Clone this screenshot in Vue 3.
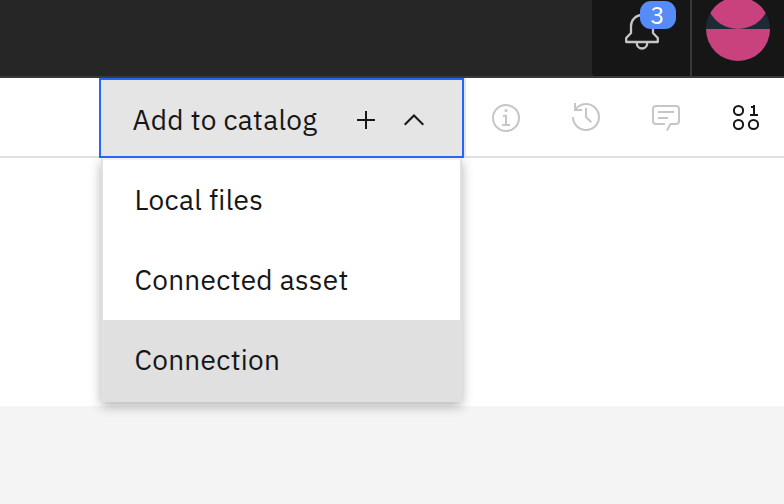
<script setup>
import { ref } from 'vue'
const items = ['Local files', 'Connected asset', 'Connection']
const active = ref(2)
</script>

<template>
  <div class="page">
    <header class="header">
      <button class="notify" aria-label="Notifications">
        <svg class="bell" width="36" height="38" viewBox="0 0 36 38">
          <path d="M2.2 30v-4L7 21v-7a11 11 0 0 1 22 0v7l4.8 5v4ZM12.8 30v1.3a5.2 5.2 0 0 0 10.4 0V30" />
        </svg>
        <span class="badge">3</span>
      </button>
      <div class="account">
        <svg class="avatar" width="64" height="64" viewBox="0 0 64 64">
          <defs><clipPath id="face"><circle cx="32" cy="32" r="32" /></clipPath></defs>
          <g clip-path="url(#face)">
            <rect width="64" height="64" fill="#1c2b35" />
            <circle cx="32" cy="0" r="32" />
            <rect y="32" width="64" height="32" />
          </g>
        </svg>
      </div>
    </header>
    <div class="toolbar">
      <button class="trigger">
        <span class="trigger-label">Add to catalog</span>
        <svg class="plus" width="20" height="20" viewBox="0 0 20 20"><path d="M10 1v18M1 10h18" /></svg>
        <svg class="chevron" width="22" height="14" viewBox="0 0 22 14"><path d="M1.7 11.8 11 2.5l9.3 9.3" /></svg>
      </button>
      <nav class="tools">
        <svg class="tool info" viewBox="0 0 32 32">
          <circle class="line" cx="16" cy="16" r="13" />
          <path class="line" d="M13 13.7h3V23M12 23h8" />
          <circle cx="16" cy="8.5" r="1.5" />
        </svg>
        <svg class="tool" viewBox="0 0 32 32">
          <path d="M20.59 22 15 16.41V7h2v8.58l5 5.01L20.59 22Z" />
          <path d="M16 2A13.94 13.94 0 0 0 6 6.23V2H4v8h8V8H7.08A12 12 0 1 1 4 16H2A14 14 0 1 0 16 2Z" />
        </svg>
        <svg class="tool" viewBox="0 0 32 32">
          <path d="M17.74 30 16 29l4-7h6a2 2 0 0 0 2-2V8a2 2 0 0 0-2-2H6a2 2 0 0 0-2 2v12a2 2 0 0 0 2 2h9v2H6a4 4 0 0 1-4-4V8a4 4 0 0 1 4-4h20a4 4 0 0 1 4 4v12a4 4 0 0 1-4 4h-4.84ZM8 10h16v2H8zM8 16h10v2H8z" />
        </svg>
        <svg class="tool dark" viewBox="0 0 32 32">
          <circle class="line" cx="8.5" cy="9.5" r="4.6" />
          <circle class="line" cx="8.5" cy="23.5" r="4.6" />
          <circle class="line" cx="23.5" cy="23.5" r="4.6" />
          <path d="M25 13V4h-2v1h-2v2h2v6h-3v2h8v-2Z" />
        </svg>
      </nav>
      <ul class="menu">
        <li v-for="(item, i) in items" :key="item" :class="{ active: i === active }" @mouseenter="active = i">
          {{ item }}
        </li>
      </ul>
    </div>
    <main class="content"></main>
    <footer class="footer"></footer>
  </div>
</template>

<style>
body { margin: 0; }
</style>

<style scoped>
.page {
  width: 784px;
  height: 504px;
  overflow: hidden;
  display: flex;
  flex-direction: column;
  background: #fff;
  color: #161616;
  font-family: "IBM Plex Sans", Roboto, sans-serif;
}
* { box-sizing: border-box; }
button { margin: 0; padding: 0; border: 0; font: inherit; color: inherit; }
svg { display: block; flex: none; }
.header {
  height: 78px;
  flex: none;
  display: flex;
  justify-content: flex-end;
  background: #262626;
  border-bottom: 2px solid #393939;
}
.notify {
  position: relative;
  display: flex;
  align-items: flex-start;
  width: 98px;
  height: 76px;
  padding: 12px 0 0 32px;
  background: #161616;
  border-radius: 0 0 0 3px;
}
.bell path { fill: none; stroke: #c6c6c6; stroke-width: 2.3; stroke-linejoin: round; }
.badge {
  position: absolute;
  left: 48px;
  top: 1px;
  width: 36px;
  height: 28px;
  border-radius: 11px;
  background: #568bf8;
  color: #fff;
  font-size: 24px;
  line-height: 28px;
  text-align: center;
  text-indent: -1px;
}
.account {
  width: 94px;
  height: 76px;
  border-left: 2px solid #393939;
  background: #161616;
  padding-left: 14px;
}
.avatar { margin-top: -3px; fill: #c9417d; }
.toolbar {
  position: relative;
  height: 80px;
  flex: none;
  display: flex;
  padding-left: 99px;
  border-bottom: 2px solid #e0e0e0;
}
.trigger {
  width: 365px;
  height: 80px;
  flex: none;
  display: flex;
  align-items: center;
  padding: 4px 0 0 31.5px;
  border: 2px solid #2466f6;
  background: #e5e5e5;
  position: relative;
  z-index: 2;
}
.trigger-label {
  width: 223.5px;
  padding-bottom: 2px;
  text-align: left;
  font-size: 28px;
  letter-spacing: 0.28px;
  white-space: nowrap;
}
.plus, .chevron { fill: none; stroke: #161616; stroke-width: 2; }
.chevron { margin-left: 27px; }
.tools {
  display: flex;
  gap: 48px;
  padding: 23px 0 0 24px;
  border-left: 2px solid #e5e5e5;
}
.tool { width: 32px; height: 32px; fill: #c6c6c6; stroke: none; }
.tool .line { fill: none; stroke: #c6c6c6; stroke-width: 2; }
.info { margin-top: 1px; }
.dark { fill: #161616; }
.dark .line { stroke: #161616; }
.menu {
  position: absolute;
  z-index: 1;
  left: 101px;
  top: 80px;
  width: 361px;
  height: 244px;
  margin: 0;
  padding: 0;
  list-style: none;
  background: #fff;
  border: 2px solid #e0e0e0;
  border-top-color: #f2f0f0;
  border-radius: 0 0 3px 3px;
  box-shadow: 0 4px 12px rgba(0, 0, 0, 0.3);
}
.menu li {
  height: 80px;
  display: flex;
  align-items: center;
  padding: 0 0 2px 31.5px;
  font-size: 28px;
  letter-spacing: 0.3px;
}
.menu li.active { background: #e0e0e0; }
.menu li:last-child { height: 80px; }
.content { height: 248px; flex: none; }
.footer { flex: 1; background: #f4f4f4; }
</style>
